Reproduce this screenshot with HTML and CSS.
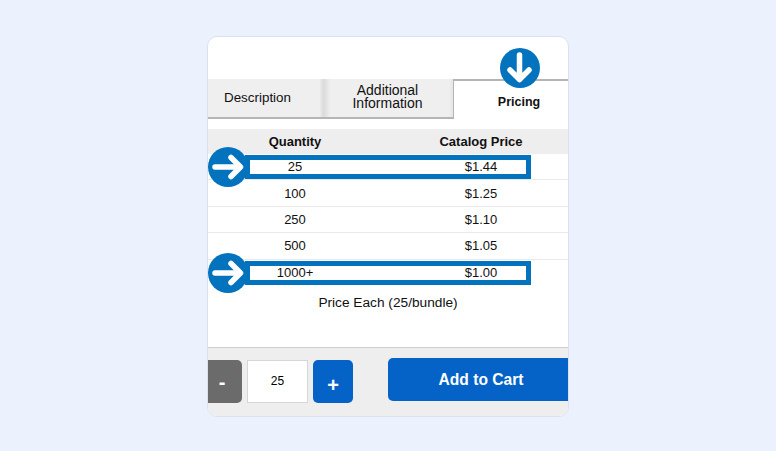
FILE: index.html
```html
<!DOCTYPE html>
<html lang="en">
<head>
  <meta charset="UTF-8" />
  <meta name="viewport" content="width=device-width, initial-scale=1.0">
  <title>Pricing</title>
  <link rel="stylesheet" href="styles.css">
</head>
<body>
  <div class="card">
    <!-- Tabs -->
    <div class="tabs">
      <div class="tab tab-description">Description</div>
      <div class="tab tab-info">Additional<br>Information</div>
      <div class="tab tab-active">
        Pricing
        <span class="marker marker-down">
          <svg viewBox="0 0 40 40" width="40" height="40">
            <path d="M19.5 7V31.5M10 22l9.500 9.500L29 22" fill="none" stroke="#fff" stroke-width="5.500" stroke-linecap="round" stroke-linejoin="round"/>
          </svg>
        </span>
      </div>
    </div>

    <!-- Price table -->
    <div class="price-table">
      <div class="price-row price-head">
        <div>Quantity</div>
        <div>Catalog Price</div>
      </div>
      <div class="price-row marked">
        <div>25</div>
        <div>$1.44</div>
        <span class="highlight"></span>
        <span class="marker marker-right">
          <svg viewBox="0 0 40 40" width="40" height="40">
            <path d="M7 20h25M23 10.500l9.500 9.500-9.500 9.500" fill="none" stroke="#fff" stroke-width="5.500" stroke-linecap="round" stroke-linejoin="round"/>
          </svg>
        </span>
      </div>
      <div class="price-row"><div>100</div><div>$1.25</div></div>
      <div class="price-row"><div>250</div><div>$1.10</div></div>
      <div class="price-row"><div>500</div><div>$1.05</div></div>
      <div class="price-row marked last">
        <div>1000+</div>
        <div>$1.00</div>
        <span class="highlight"></span>
        <span class="marker marker-right">
          <svg viewBox="0 0 40 40" width="40" height="40">
            <path d="M7 20h25M23 10.500l9.500 9.500-9.500 9.500" fill="none" stroke="#fff" stroke-width="5.500" stroke-linecap="round" stroke-linejoin="round"/>
          </svg>
        </span>
      </div>
    </div>
    <p class="price-note">Price Each (25/bundle)</p>

    <!-- Cart bar -->
    <div class="cart-bar">
      <div class="stepper">
        <button class="step step-minus">-</button>
        <div class="qty">25</div>
        <button class="step step-plus">+</button>
      </div>
      <button class="add-cart">Add to Cart</button>
    </div>
  </div>
</body>
</html>
```

FILE: styles.css
```css
:root {
  --marker-blue: #0473bd;
  --button-blue: #0563c8;
  --page-bg: #ebf1fd;
  --panel-gray: #eeeeee;
  --line-gray: #b5b5b5;
}

* {
  box-sizing: border-box;
  margin: 0;
  padding: 0;
}

body {
  font-family: 'Liberation Sans', Arial, sans-serif;
  background-color: var(--page-bg);
  color: #111;
  height: 451px;
  display: flex;
  justify-content: center;
  padding-top: 36px;
  overflow: hidden;
}

.card {
  width: 362px;
  height: 381px;
  background-color: #fff;
  border: 1px solid #dbe1ee;
  border-radius: 10px;
  overflow: hidden;
  display: flex;
  flex-direction: column;
  padding-top: 42px;
}

/* Tabs */
.tabs {
  display: flex;
  height: 40px;
  text-align: center;
}

.tab {
  display: flex;
  align-items: center;
  justify-content: center;
}

.tab-description {
  width: 116px;
  font-size: 13.4px;
  background: linear-gradient(90deg, #efefef 96%, #d8d8d8);
  border-bottom: 2px solid var(--line-gray);
  padding-right: 17px;
  padding-bottom: 2px;
}

.tab-info {
  width: 130px;
  font-size: 14px;
  line-height: 13px;
  background: linear-gradient(90deg, #dcdcdc, #efefef 5%, #efefef 97%, #e4e4e4);
  border-bottom: 2px solid var(--line-gray);
  border-right: 1px solid var(--line-gray);
  padding-right: 2px;
  padding-bottom: 2px;
}

.tab-active {
  flex: 1;
  position: relative;
  font-size: 12.5px;
  font-weight: bold;
  border-top: 2px solid var(--line-gray);
  padding-left: 16px;
  padding-top: 3px;
}

.marker {
  position: absolute;
  width: 40px;
  height: 40px;
  border-radius: 50%;
  background-color: var(--marker-blue);
  display: block;
}

.marker svg {
  display: block;
}

.marker-down {
  left: 46px;
  top: -33px;
}

/* Price table */
.price-table {
  margin-top: 10px;
  font-size: 13px;
}

.price-row {
  position: relative;
  display: grid;
  grid-template-columns: 174px 174px;
  justify-content: space-between;
  align-items: center;
  text-align: center;
  height: 26.4px;
  border-bottom: 1px solid #e9e9e9;
}

.price-head {
  height: 25px;
  background-color: var(--panel-gray);
  font-weight: bold;
  border-bottom: none;
}

.price-row.last {
  border-bottom: none;
}

.highlight {
  position: absolute;
  left: 37px;
  top: 1px;
  width: 286px;
  height: 24px;
  border: 5px solid var(--marker-blue);
}

.marker-right {
  left: 0;
  top: -7px;
}

.price-note {
  font-size: 13.7px;
  text-align: center;
  margin-top: 9px;
}

/* Cart bar */
.cart-bar {
  margin-top: auto;
  height: 69px;
  background-color: var(--panel-gray);
  border-top: 1px solid #cfcfcf;
  display: flex;
  justify-content: space-between;
  align-items: flex-start;
  padding-top: 10px;
}

.stepper {
  display: flex;
  gap: 5px;
  margin-top: 2px;
}

.step {
  height: 43px;
  border: none;
  border-radius: 0 5px 5px 0;
  color: #fff;
  font-family: inherit;
  font-weight: bold;
  font-size: 20px;
}

.step-minus {
  width: 34px;
  background-color: #6b6b6b;
  padding-right: 6px;
  padding-top: 2px;
}

.step-plus {
  width: 40px;
  border-radius: 5px;
  background-color: var(--button-blue);
  padding-top: 7px;
}

.qty {
  width: 61px;
  height: 43px;
  background-color: #fff;
  border: 1px solid #d6d6d6;
  font-size: 12px;
  color: #000;
  display: flex;
  align-items: center;
  justify-content: center;
  padding-bottom: 1px;
}

.add-cart {
  width: 180px;
  height: 43px;
  border: none;
  border-radius: 5px 0 0 5px;
  background-color: var(--button-blue);
  color: #fff;
  font-family: inherit;
  font-weight: bold;
  font-size: 15.6px;
  padding-left: 6px;
  padding-top: 1px;
}
```
